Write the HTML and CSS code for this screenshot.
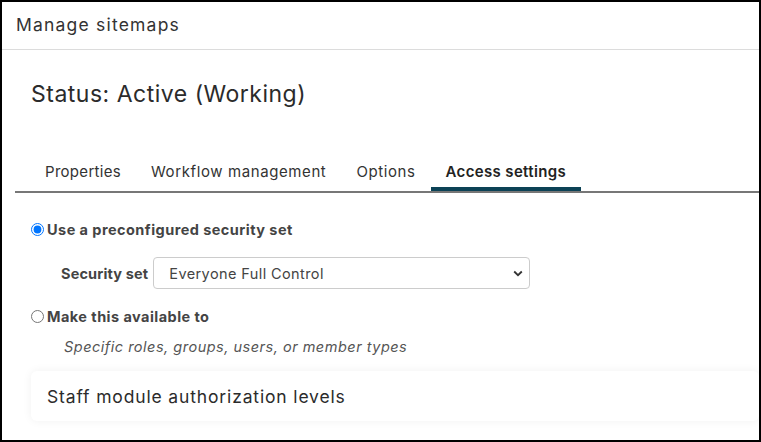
FILE: index.html
```html
<!DOCTYPE html>
<html>
<head>
<meta charset="utf-8">
<link rel="stylesheet" href="styles.css">
</head>
<body>
<div class="frame">
  <div class="header">Manage sitemaps</div>
  <div class="content">
    <h1 class="status">Status: Active (Working)</h1>
    <ul class="tabs">
      <li class="tab">Properties</li>
      <li class="tab">Workflow management</li>
      <li class="tab">Options</li>
      <li class="tab active">Access settings</li>
    </ul>
    <div class="form">
      <label class="radio-row"><input type="radio" name="access" checked><span>Use a preconfigured security set</span></label>
      <div class="set-row">
        <span class="set-label">Security set</span>
        <div class="select">
          <span>Everyone Full Control</span>
          <svg class="chev" width="10" height="7" viewBox="0 0 10 7"><path d="M1.2 1.5 L5 5.2 L8.8 1.5" fill="none" stroke="#333" stroke-width="1.8"/></svg>
        </div>
      </div>
      <label class="radio-row r2"><input type="radio" name="access"><span>Make this available to</span></label>
      <div class="hint">Specific roles, groups, users, or member types</div>
    </div>
    <div class="card">Staff module authorization levels</div>
  </div>
</div>
</body>
</html>
```
FILE: styles.css
```css
* { box-sizing: border-box; }
html, body { margin: 0; padding: 0; background: #fff; }
body { font-family: Inter, "Open Sans", sans-serif; color: #333; }
.frame {
  width: 761px; height: 442px;
  border: 2px solid #000;
  overflow: hidden;
}
.header {
  height: 48px;
  padding: 0 0 3px 14px;
  display: flex; align-items: center;
  font-size: 17.5px; letter-spacing: 1.2px; color: #333;
  border-bottom: 1px solid #dcdcdc;
}
.content { padding-left: 13px; }
.status {
  margin: 0; font-weight: 400;
  font-size: 23px; letter-spacing: 0.5px; color: #2b2b2b;
  padding: 30px 0 0 16px; height: 93px;
}
.tabs {
  list-style: none; margin: 0; padding: 0 0 0 15px;
  display: flex;
  border-bottom: 2px solid #777;
}
.tab {
  padding: 0 15px; height: 48px;
  display: flex; align-items: center; padding-top: 13px;
  font-size: 15px; letter-spacing: 0.6px; color: #333;
  border-bottom: 4px solid transparent;
}
.tab:first-child { letter-spacing: 0.3px; }
.tab.active { font-weight: 600; color: #222; border-bottom-color: #0c4256; letter-spacing: 0.35px; }
.form { padding: 27px 0 0 16px; }
.radio-row { display: flex; align-items: center; font-size: 14.5px; letter-spacing: 0.45px; font-weight: 700; color: #444; height: 18px; }
.radio-row input { margin: 0 3px 0 0; width: 13px; height: 13px; }
.set-row { display: flex; align-items: center; margin-top: 19px; padding-left: 30px; }
.set-label { font-weight: 700; font-size: 14.5px; letter-spacing: 0.15px; color: #444; margin-right: 5px; }
.select {
  width: 377px; height: 32px;
  border: 1px solid #ccc; border-radius: 4px;
  display: flex; align-items: center; justify-content: space-between;
  padding: 0 4px 0 15px;
  font-size: 14.5px; letter-spacing: 0.4px; color: #444;
}
.chev { margin-right: 2px; }
.r2 { margin-top: 18px; }
.hint { font-style: italic; font-size: 14.5px; letter-spacing: 0.5px; color: #555; padding-left: 33px; margin-top: 13px; }
.card {
  margin: 16px 0 0 16px; height: 50px;
  background: #fff; border-radius: 6px;
  box-shadow: 0 0 10px rgba(0,0,0,0.06);
  display: flex; align-items: center; padding-left: 16px;
  font-size: 17.5px; letter-spacing: 0.85px; color: #2b2b2b;
}
```
